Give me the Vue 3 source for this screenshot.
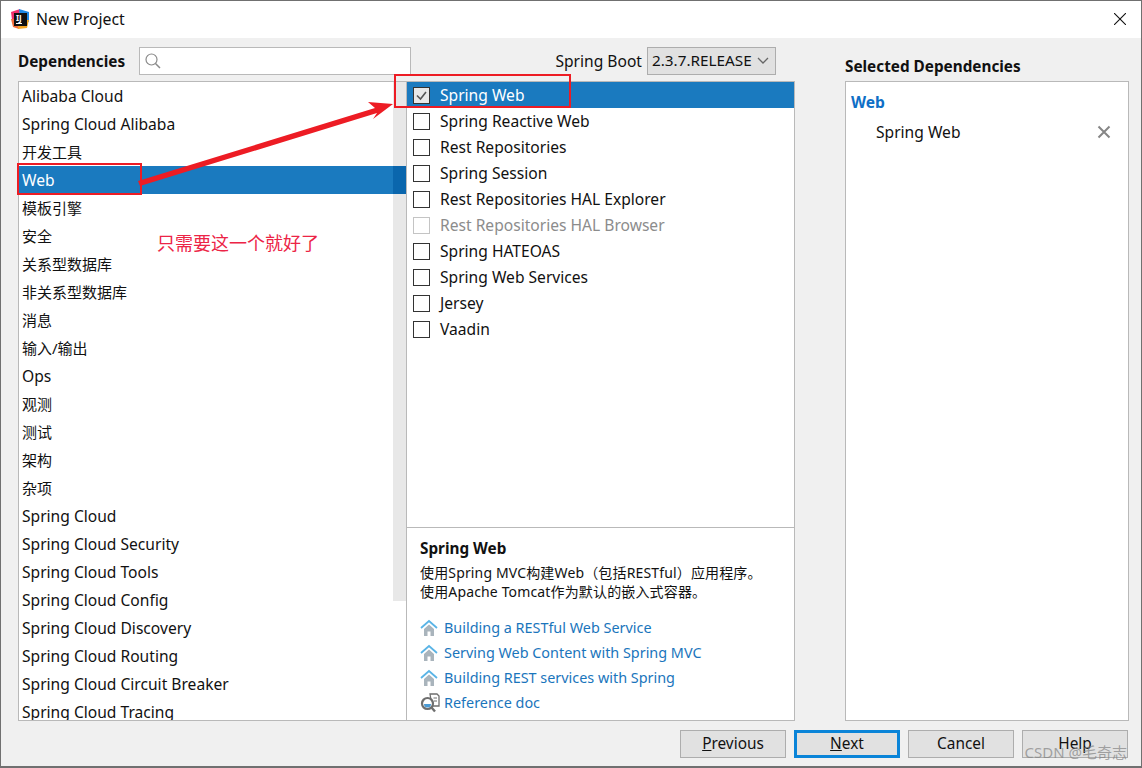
<script setup>
import { ref } from 'vue'

const categories = ref([
  'Alibaba Cloud', 'Spring Cloud Alibaba', '开发工具', 'Web', '模板引擎', '安全',
  '关系型数据库', '非关系型数据库', '消息', '输入/输出', 'Ops', '观测', '测试', '架构', '杂项',
  'Spring Cloud', 'Spring Cloud Security', 'Spring Cloud Tools', 'Spring Cloud Config',
  'Spring Cloud Discovery', 'Spring Cloud Routing', 'Spring Cloud Circuit Breaker', 'Spring Cloud Tracing'
])

const deps = ref([
  { nome: 'Spring Web', checked: true },
  { nome: 'Spring Reactive Web' },
  { nome: 'Rest Repositories' },
  { nome: 'Spring Session' },
  { nome: 'Rest Repositories HAL Explorer' },
  { nome: 'Rest Repositories HAL Browser', disabled: true },
  { nome: 'Spring HATEOAS' },
  { nome: 'Spring Web Services' },
  { nome: 'Jersey' },
  { nome: 'Vaadin' }
])

const guides = ref([
  'Building a RESTful Web Service',
  'Serving Web Content with Spring MVC',
  'Building REST services with Spring'
])

// os nomes em chines ficam em 15px, o resto um pouco maior
function isCjk(texto) {
  return /[^\x00-\x7f]/.test(texto)
}
</script>

<template>
  <div class="janela">
    <header class="titlebar">
      <svg class="logo" width="20" height="20" viewBox="0 0 20 20">
        <path d="M1 3 L10 0 L9 10 L2 11 Z" fill="#f0306a" />
        <path d="M9 0 L19 3 L19 13 L10 10 Z" fill="#1e88e5" />
        <path d="M1 10 L8 10 L9 20 L3 18 Z" fill="#f26f3c" />
        <path d="M9 11 L19 11 L17 19 L8 20 Z" fill="#f5a623" />
        <rect x="4" y="4" width="13" height="13" fill="#111" />
        <text x="6" y="12" class="logo-txt">IJ</text>
        <rect x="6" y="14" width="6" height="1" fill="#fff" />
      </svg>
      <span class="titulo">New Project</span>
      <svg width="12" height="12" viewBox="0 0 12 12">
        <path d="M0 0 L12 12 M12 0 L0 12" stroke="#111" stroke-width="1.1" fill="none" />
      </svg>
    </header>

    <main class="corpo">
      <div class="topo-esq">
        <span class="bold">Dependencies</span>
        <div class="busca">
          <svg width="18" height="18" viewBox="0 0 18 18">
            <circle cx="7.5" cy="7.5" r="5.5" stroke="#8a8a8a" stroke-width="1.2" fill="none" />
            <path d="M11.5 11.5 L16 16" stroke="#8a8a8a" stroke-width="1.5" />
          </svg>
        </div>
      </div>
      <div class="topo-meio">
        <span>Spring Boot</span>
        <div class="versao">
          <span>2.3.7.RELEASE</span>
          <svg width="12" height="8" viewBox="0 0 12 8">
            <path d="M1 1 L6 6 L11 1" stroke="#666" stroke-width="1.3" fill="none" />
          </svg>
        </div>
      </div>
      <div class="topo-dir bold">Selected Dependencies</div>

      <section class="lista">
        <div class="barra"></div>
        <div
          v-for="c in categories"
          :key="c"
          class="item"
          :class="{ ativo: c === 'Web', cjk: isCjk(c) }"
        >{{ c }}</div>
      </section>

      <section class="meio">
        <div class="deps">
          <div
            v-for="d in deps"
            :key="d.nome"
            class="dep"
            :class="{ ativo: d.checked, desativado: d.disabled }"
          >
            <span class="check">
              <svg v-if="d.checked" width="13" height="13" viewBox="0 0 13 13">
                <path d="M2 6.5 L5.5 10 L11 3" stroke="#555" stroke-width="1.6" fill="none" />
              </svg>
            </span>
            {{ d.nome }}
          </div>
        </div>
        <div class="info">
          <div class="bold info-titulo">Spring Web</div>
          <p>使用Spring MVC构建Web（包括RESTful）应用程序。</p>
          <p>使用Apache Tomcat作为默认的嵌入式容器。</p>
          <div class="links">
            <a v-for="g in guides" :key="g" class="link">
              <svg width="18" height="18" viewBox="0 0 18 18">
                <path d="M1 9 L9 2 L17 9" stroke="#5ab4e6" stroke-width="1.8" fill="none" />
                <path d="M4 10 L9 5.5 L14 10 V17 H10.5 V12.5 H7.5 V17 H4 Z" fill="#a9b4bc" />
              </svg>
              {{ g }}
            </a>
            <a class="link link-doc">
              <svg width="20" height="20" viewBox="0 0 20 20">
                <path d="M10 1 H17 L19 3 V13 H12 Z" fill="#fff" stroke="#6e6e6e" stroke-width="1.3" />
                <path d="M13.5 5 H17 M14 8 H17" stroke="#6e6e6e" />
                <circle cx="7.5" cy="10.5" r="5.5" fill="#fff" stroke="#6e6e6e" stroke-width="2.2" />
                <path d="M4 11 A3.5 3.5 0 0 0 11 11 Z" fill="#4a9ad4" />
                <path d="M11.5 14.5 L15 18.5" stroke="#6e6e6e" stroke-width="2.4" />
              </svg>
              Reference doc
            </a>
          </div>
        </div>
      </section>

      <section class="selecionados">
        <div class="grupo bold">Web</div>
        <div class="escolhido">
          <span>Spring Web</span>
          <svg width="14" height="14" viewBox="0 0 14 14">
            <path d="M1.5 1.5 L12.5 12.5 M12.5 1.5 L1.5 12.5" stroke="#868686" stroke-width="2" fill="none" />
          </svg>
        </div>
      </section>
    </main>

    <footer class="rodape">
      <button class="btn"><u>P</u>revious</button>
      <button class="btn principal"><u>N</u>ext</button>
      <button class="btn">Cancel</button>
      <button class="btn">Help</button>
    </footer>

    <!-- anotacoes por cima do print -->
    <div class="marca marca-web"></div>
    <div class="marca marca-dep"></div>
    <svg class="seta" width="1142" height="768" viewBox="0 0 1142 768">
      <path d="M138 181 L375 108 L368 102 L393 104 L373 119 L377 113 L140 186 Z" fill="#ed1c24" />
    </svg>
    <div class="nota">只需要这一个就好了</div>
    <div class="csdn">CSDN @毛奇志</div>
  </div>
</template>

<style scoped>
.janela {
  position: relative;
  width: 1142px;
  height: 768px;
  box-sizing: border-box;
  border: 1px solid #707070;
  border-bottom-width: 2px;
  background: #f0f0f0;
  overflow: hidden;
  font-family: "Noto Sans", "Noto Sans CJK SC", sans-serif;
  font-size: 15.6px;
  color: #111;
  display: flex;
  flex-direction: column;
}

.titlebar {
  height: 37px;
  flex: none;
  background: #fff;
  display: flex;
  align-items: center;
  padding: 0 15px 2px 9px;
  box-sizing: border-box;
}

.logo {
  margin-right: 6px;
}

.logo-txt {
  font-size: 8px;
  font-weight: 700;
  fill: #fff;
}

.titulo {
  flex: 1;
  font-size: 15.8px;
}

.corpo {
  flex: none;
  display: grid;
  grid-template-columns: 388px 389px 334px;
  grid-template-rows: 43px 640px;
  padding-left: 17px;
}

.bold {
  font-weight: 700;
  font-size: 15.3px;
}

.topo-esq {
  display: flex;
  align-items: flex-start;
  padding-top: 9px;
  gap: 14px;
}

.topo-esq .bold {
  line-height: 28px;
}

.busca {
  width: 266px;
  height: 26px;
  border: 1px solid #b9b9b9;
  background: #fff;
  display: flex;
  align-items: center;
  padding-left: 4px;
  flex: none;
}

.topo-meio {
  display: flex;
  justify-content: flex-end;
  align-items: flex-start;
  gap: 5px;
  padding-top: 9px;
  line-height: 28px;
  margin-right: 19px;
}

.versao {
  width: 127px;
  height: 25px;
  border: 1px solid #adadad;
  background: #e1e1e1;
  display: flex;
  align-items: center;
  justify-content: space-between;
  line-height: 23px;
  padding-bottom: 1px;
  text-indent: 4px;
  font-size: 15.3px;
}

.versao svg {
  margin-right: 6px;
}

.topo-dir {
  margin-left: 50px;
  padding-top: 16px;
  line-height: 24px;
}

.lista {
  position: relative;
  border: 1px solid #b9b9b9;
  border-right: none;
  background: #fff;
  overflow: hidden;
}

.barra {
  position: absolute;
  top: 0;
  right: 0;
  width: 13px;
  height: 519px;
  background: #e8e8e8;
}

.item {
  position: relative;
  height: 28px;
  line-height: 28px;
  padding-left: 3px;
}

.item.cjk {
  font-size: 15px;
}

.item.ativo {
  background: #1a7abf;
  color: #fff;
}

.item.ativo::after {
  content: "";
  position: absolute;
  top: 0;
  right: 0;
  width: 13px;
  height: 28px;
  background: #0a66ad;
}

.meio {
  border: 1px solid #b9b9b9;
  background: #fff;
  display: flex;
  flex-direction: column;
}

.deps {
  height: 445px;
  flex: none;
  border-bottom: 1px solid #b9b9b9;
}

.dep {
  height: 26px;
  display: flex;
  align-items: center;
  padding-left: 6px;
  gap: 10px;
}

.dep.ativo {
  background: #1a7abf;
  color: #fff;
}

.dep.desativado {
  color: #8c8c8c;
}

.check {
  width: 15px;
  height: 15px;
  flex: none;
  border: 1px solid #333;
  background: #fff;
  display: flex;
  align-items: center;
  justify-content: center;
}

.dep.ativo .check {
  background: #e8e8e8;
}

.dep.desativado .check {
  border-color: #c4c4c4;
}

.info {
  padding: 9px 13px;
  font-size: 14px;
  letter-spacing: 0.15px;
}

.info-titulo {
  letter-spacing: 0;
  line-height: 22px;
}

.info p {
  margin: 0;
  line-height: 19px;
}

.info-titulo + p {
  margin-top: 4px;
}

.links {
  margin-top: 14px;
  display: flex;
  flex-direction: column;
}

.link {
  height: 25px;
  display: flex;
  align-items: center;
  gap: 6px;
  font-size: 14.4px;
  letter-spacing: 0;
  color: #1a75bc;
}

.link-doc {
  gap: 4px;
}

.selecionados {
  margin-left: 50px;
  border: 1px solid #b9b9b9;
  background: #fff;
  padding: 8px 0 0 5px;
}

.grupo {
  color: #0f6fc6;
  font-size: 15.6px;
  line-height: 24px;
}

.escolhido {
  display: flex;
  justify-content: space-between;
  align-items: center;
  margin-top: 6px;
  padding: 0 17px 0 25px;
  line-height: 24px;
}

.rodape {
  display: flex;
  justify-content: flex-end;
  gap: 8px;
  padding: 9px 13px 0 0;
}

.btn {
  width: 106px;
  height: 28px;
  padding: 0 0 2px;
  border: 1px solid #adadad;
  background: #e1e1e1;
  font: inherit;
  font-size: 15.4px;
  color: #111;
}

.btn.principal {
  border: 3px solid #0a84d8;
}

.marca {
  position: absolute;
  border: 2px solid #ed1c24;
  box-sizing: border-box;
}

.marca-web {
  left: 16px;
  top: 162px;
  width: 125px;
  height: 32px;
}

.marca-dep {
  left: 393px;
  top: 73px;
  width: 177px;
  height: 34px;
}

.seta {
  position: absolute;
  left: -1px;
  top: -1px;
  pointer-events: none;
}

.nota {
  position: absolute;
  left: 156px;
  top: 229px;
  font-size: 18px;
  line-height: 26px;
  color: #ec2446;
}

.csdn {
  position: absolute;
  right: 14px;
  top: 741px;
  font-size: 15px;
  line-height: 20px;
  color: rgba(130, 130, 130, 0.7);
}
</style>

<style>
body {
  background: #f0f0f0;
}
</style>
